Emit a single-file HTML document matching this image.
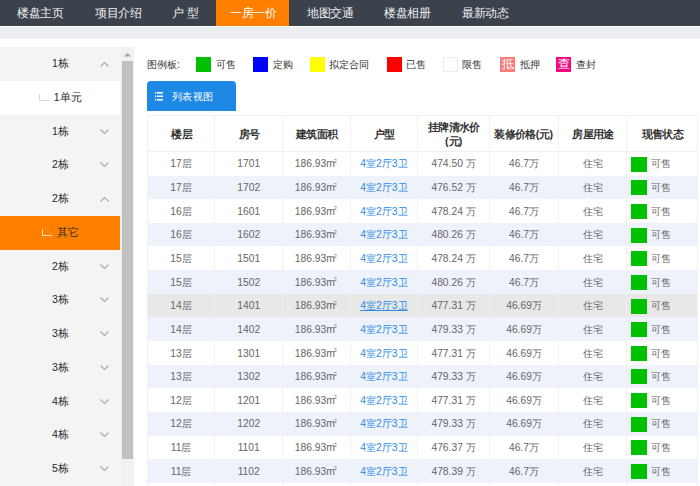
<!DOCTYPE html><html><head><meta charset="utf-8"><style>
*{margin:0;padding:0;box-sizing:border-box}
html,body{width:700px;height:486px;overflow:hidden;background:#fff}
body{position:relative;font-family:"Liberation Sans",sans-serif;}
.a{position:absolute;white-space:nowrap}
#nav{left:0;top:0;width:700px;height:26.4px;background:#3c424c}
.nt{position:absolute;top:0;height:26px;line-height:26px;font-size:12px;color:#eceef0;transform:scale(0.97);transform-origin:0 50%}
#tab{left:216.4px;top:0;width:72.7px;height:26.4px;background:#ff8000}
#band{left:0;top:27.4px;width:700px;height:11.2px;background:#eceef2}
#side{left:0;top:47.1px;width:121px;height:440px;background:#f4f4f4}
.si{position:absolute;left:0;width:120.4px;height:33.75px;line-height:33.75px;font-size:10.5px;color:#2a2a2a}
.si .t{position:absolute;left:0;width:121px;text-align:center}
.chev{position:absolute;left:100.3px;width:9px;height:6px}
#track{left:120.5px;top:47px;width:13.8px;height:439px;background:#f1f1f1}
#thumb{left:121.8px;top:61.3px;width:11.4px;height:397.7px;background:#c1c1c1}
.lg{position:absolute;top:57px;width:15px;height:14.6px}
.lt{position:absolute;top:56.5px;height:16px;line-height:16px;font-size:10.4px;color:#333}
#btab{left:147px;top:81px;width:88.5px;height:30.2px;background:#1e88e5;border-radius:4px 4px 0 0}
.cell{position:absolute;text-align:center;font-size:10.3px;color:#666}
.hd{font-weight:bold;color:#333;transform:scale(1.03)}
.row{position:absolute;left:147.5px;width:550px}
.vl{position:absolute;width:1px;background:#f0f1f4}
.hl{position:absolute;height:1px;background:#f0f1f4}
.lk{color:#2b8ce6}
.m2{font-size:10.4px;letter-spacing:0}.m2 i{font-style:normal;font-size:5.5px;position:relative;top:-4.4px;left:-1.2px}
.gb{position:absolute;width:15.6px;height:15px;background:#00c000}
</style></head><body><div id="nav" class="a">
<div class="nt" style="left:16.8px">楼盘主页</div>
<div class="nt" style="left:94.5px">项目介绍</div>
<div class="nt" style="left:172.10000000000002px">户 型</div>
<div class="nt" style="left:306.8px">地图交通</div>
<div class="nt" style="left:384.1px">楼盘相册</div>
<div class="nt" style="left:461.7px">最新动态</div>
</div>
<div id="tab" class="a"><div class="nt" style="left:0.7px;width:72.5px;text-align:center;color:#fff;transform-origin:50% 50%">一房一价</div></div>
<div id="band" class="a"></div>
<div id="side" class="a">
<div class="si" style="top:0.0px"><div class="t">1栋</div><svg class="chev" style="top:14px" viewBox="0 0 9 6"><path d="M0.5 5.5 L4.5 1.5 L8.5 5.5" fill="none" stroke="#ababab" stroke-width="1.1"/></svg></div>
<div class="si" style="top:33.75px;background:#fff"><div class="t"><span style="display:inline-block;width:10px;height:7px;border-left:1px solid #d9d9d9;border-bottom:1px solid #d9d9d9;margin-right:4.5px;vertical-align:0px"></span>1单元</div></div>
<div class="si" style="top:67.5px"><div class="t">1栋</div><svg class="chev" style="top:14px" viewBox="0 0 9 6"><path d="M0.5 0.5 L4.5 4.5 L8.5 0.5" fill="none" stroke="#ababab" stroke-width="1.1"/></svg></div>
<div class="si" style="top:101.25px"><div class="t">2栋</div><svg class="chev" style="top:14px" viewBox="0 0 9 6"><path d="M0.5 0.5 L4.5 4.5 L8.5 0.5" fill="none" stroke="#ababab" stroke-width="1.1"/></svg></div>
<div class="si" style="top:135.0px"><div class="t">2栋</div><svg class="chev" style="top:14px" viewBox="0 0 9 6"><path d="M0.5 5.5 L4.5 1.5 L8.5 5.5" fill="none" stroke="#ababab" stroke-width="1.1"/></svg></div>
<div class="si" style="top:168.75px;background:#ff8000"><div class="t"><span style="display:inline-block;width:10px;height:7px;border-left:1px solid #ffdcb5;border-bottom:1px solid #ffdcb5;margin-right:4.5px;vertical-align:0px"></span>其它</div></div>
<div class="si" style="top:202.5px"><div class="t">2栋</div><svg class="chev" style="top:14px" viewBox="0 0 9 6"><path d="M0.5 0.5 L4.5 4.5 L8.5 0.5" fill="none" stroke="#ababab" stroke-width="1.1"/></svg></div>
<div class="si" style="top:236.25px"><div class="t">3栋</div><svg class="chev" style="top:14px" viewBox="0 0 9 6"><path d="M0.5 0.5 L4.5 4.5 L8.5 0.5" fill="none" stroke="#ababab" stroke-width="1.1"/></svg></div>
<div class="si" style="top:270.0px"><div class="t">3栋</div><svg class="chev" style="top:14px" viewBox="0 0 9 6"><path d="M0.5 0.5 L4.5 4.5 L8.5 0.5" fill="none" stroke="#ababab" stroke-width="1.1"/></svg></div>
<div class="si" style="top:303.75px"><div class="t">3栋</div><svg class="chev" style="top:14px" viewBox="0 0 9 6"><path d="M0.5 0.5 L4.5 4.5 L8.5 0.5" fill="none" stroke="#ababab" stroke-width="1.1"/></svg></div>
<div class="si" style="top:337.5px"><div class="t">4栋</div><svg class="chev" style="top:14px" viewBox="0 0 9 6"><path d="M0.5 0.5 L4.5 4.5 L8.5 0.5" fill="none" stroke="#ababab" stroke-width="1.1"/></svg></div>
<div class="si" style="top:371.25px"><div class="t">4栋</div><svg class="chev" style="top:14px" viewBox="0 0 9 6"><path d="M0.5 0.5 L4.5 4.5 L8.5 0.5" fill="none" stroke="#ababab" stroke-width="1.1"/></svg></div>
<div class="si" style="top:405.0px"><div class="t">5栋</div><svg class="chev" style="top:14px" viewBox="0 0 9 6"><path d="M0.5 0.5 L4.5 4.5 L8.5 0.5" fill="none" stroke="#ababab" stroke-width="1.1"/></svg></div>
</div>
<div id="track" class="a"></div>
<svg class="a" style="left:123px;top:52px" width="9" height="5" viewBox="0 0 9 5"><path d="M1 4.5 L4.5 1 L8 4.5Z" fill="#a3a3a3"/></svg>
<div id="thumb" class="a"></div>
<div class="lt" style="left:147px">图例板:</div>
<div class="lg" style="left:196.4px;background:#00c000;"></div>
<div class="lt" style="left:215.9px">可售</div>
<div class="lg" style="left:253px;background:#0000ff;"></div>
<div class="lt" style="left:272.5px">定购</div>
<div class="lg" style="left:309.6px;background:#ffff00;"></div>
<div class="lt" style="left:329.1px">拟定合同</div>
<div class="lg" style="left:386.8px;background:#ff0000;"></div>
<div class="lt" style="left:406.3px">已售</div>
<div class="lg" style="left:442.6px;background:#fff;border:1px solid #ebebeb"></div>
<div class="lt" style="left:462.1px">限售</div>
<div class="lg" style="left:500px;background:#f87a7a;color:#fff;font-size:11.6px;line-height:14.6px;text-align:center">抵</div>
<div class="lt" style="left:519.5px">抵押</div>
<div class="lg" style="left:556px;background:#f5087f;color:#fff;font-size:11.6px;line-height:14.6px;text-align:center">查</div>
<div class="lt" style="left:575.5px">查封</div>
<div id="btab" class="a"><svg style="position:absolute;left:8px;top:11.3px" width="8.2" height="9" viewBox="0 0 8.2 9"><g fill="#fff"><rect x="0" y="0" width="1.2" height="1.6"/><rect x="1.9" y="0" width="6.2" height="1.6"/><rect x="0" y="3.5" width="1.2" height="1.6"/><rect x="1.9" y="3.5" width="6.2" height="1.6"/><rect x="0" y="7" width="1.2" height="1.6"/><rect x="1.9" y="7" width="6.2" height="1.6"/></g></svg><span style="position:absolute;left:25px;top:0.5px;line-height:30px;font-size:10px;color:#fff;transform:scale(1.03);transform-origin:0 50%">列表视图</span></div>
<div class="cell hd a" style="left:147.5px;width:67.1px;top:115.4px;height:36.5px;line-height:39.5px">楼层</div>
<div class="cell hd a" style="left:214.6px;width:68.29999999999998px;top:115.4px;height:36.5px;line-height:39.5px">房号</div>
<div class="cell hd a" style="left:282.9px;width:67.10000000000002px;top:115.4px;height:36.5px;line-height:39.5px">建筑面积</div>
<div class="cell hd a" style="left:350.0px;width:67.89999999999998px;top:115.4px;height:36.5px;line-height:39.5px">户型</div>
<div class="cell hd a" style="left:417.9px;width:71.40000000000003px;top:115.4px;height:36.5px;line-height:13.5px;padding-top:6px">挂牌清水价<br>(元)</div>
<div class="cell hd a" style="left:489.3px;width:69.49999999999994px;top:115.4px;height:36.5px;line-height:39.5px">装修价格(元)</div>
<div class="cell hd a" style="left:558.8px;width:67.80000000000007px;top:115.4px;height:36.5px;line-height:39.5px">房屋用途</div>
<div class="cell hd a" style="left:626.6px;width:70.79999999999995px;top:115.4px;height:36.5px;line-height:39.5px">现售状态</div>
<div class="row" style="top:151.9px;height:23.64px;background:#fff"></div>
<div class="cell a" style="left:147.5px;width:67.1px;top:152.4px;height:23.64px;line-height:23.64px;">17层</div>
<div class="cell a" style="left:214.6px;width:68.29999999999998px;top:152.4px;height:23.64px;line-height:23.64px;">1701</div>
<div class="cell a" style="left:282.9px;width:67.10000000000002px;top:152.4px;height:23.64px;line-height:23.64px;">186.93<span class=m2>m<i>2</i></span></div>
<div class="cell a lk" style="left:350.0px;width:67.89999999999998px;top:152.4px;height:23.64px;line-height:23.64px;">4室2厅3卫</div>
<div class="cell a" style="left:417.9px;width:71.40000000000003px;top:152.4px;height:23.64px;line-height:23.64px;">474.50 万</div>
<div class="cell a" style="left:489.3px;width:69.49999999999994px;top:152.4px;height:23.64px;line-height:23.64px;">46.7万</div>
<div class="cell a" style="left:558.8px;width:67.80000000000007px;top:152.4px;height:23.64px;line-height:23.64px;">住宅</div>
<div class="gb" style="left:631px;top:156.70000000000002px"></div><div class="cell a" style="left:650.7px;top:152.4px;line-height:23.64px;text-align:left">可售</div>
<div class="row" style="top:175.54000000000002px;height:23.64px;background:#eef2fb"></div>
<div class="cell a" style="left:147.5px;width:67.1px;top:176.04000000000002px;height:23.64px;line-height:23.64px;">17层</div>
<div class="cell a" style="left:214.6px;width:68.29999999999998px;top:176.04000000000002px;height:23.64px;line-height:23.64px;">1702</div>
<div class="cell a" style="left:282.9px;width:67.10000000000002px;top:176.04000000000002px;height:23.64px;line-height:23.64px;">186.93<span class=m2>m<i>2</i></span></div>
<div class="cell a lk" style="left:350.0px;width:67.89999999999998px;top:176.04000000000002px;height:23.64px;line-height:23.64px;">4室2厅3卫</div>
<div class="cell a" style="left:417.9px;width:71.40000000000003px;top:176.04000000000002px;height:23.64px;line-height:23.64px;">476.52 万</div>
<div class="cell a" style="left:489.3px;width:69.49999999999994px;top:176.04000000000002px;height:23.64px;line-height:23.64px;">46.7万</div>
<div class="cell a" style="left:558.8px;width:67.80000000000007px;top:176.04000000000002px;height:23.64px;line-height:23.64px;">住宅</div>
<div class="gb" style="left:631px;top:180.34000000000003px"></div><div class="cell a" style="left:650.7px;top:176.04000000000002px;line-height:23.64px;text-align:left">可售</div>
<div class="row" style="top:199.18px;height:23.64px;background:#fff"></div>
<div class="cell a" style="left:147.5px;width:67.1px;top:199.68px;height:23.64px;line-height:23.64px;">16层</div>
<div class="cell a" style="left:214.6px;width:68.29999999999998px;top:199.68px;height:23.64px;line-height:23.64px;">1601</div>
<div class="cell a" style="left:282.9px;width:67.10000000000002px;top:199.68px;height:23.64px;line-height:23.64px;">186.93<span class=m2>m<i>2</i></span></div>
<div class="cell a lk" style="left:350.0px;width:67.89999999999998px;top:199.68px;height:23.64px;line-height:23.64px;">4室2厅3卫</div>
<div class="cell a" style="left:417.9px;width:71.40000000000003px;top:199.68px;height:23.64px;line-height:23.64px;">478.24 万</div>
<div class="cell a" style="left:489.3px;width:69.49999999999994px;top:199.68px;height:23.64px;line-height:23.64px;">46.7万</div>
<div class="cell a" style="left:558.8px;width:67.80000000000007px;top:199.68px;height:23.64px;line-height:23.64px;">住宅</div>
<div class="gb" style="left:631px;top:203.98000000000002px"></div><div class="cell a" style="left:650.7px;top:199.68px;line-height:23.64px;text-align:left">可售</div>
<div class="row" style="top:222.82px;height:23.64px;background:#eef2fb"></div>
<div class="cell a" style="left:147.5px;width:67.1px;top:223.32px;height:23.64px;line-height:23.64px;">16层</div>
<div class="cell a" style="left:214.6px;width:68.29999999999998px;top:223.32px;height:23.64px;line-height:23.64px;">1602</div>
<div class="cell a" style="left:282.9px;width:67.10000000000002px;top:223.32px;height:23.64px;line-height:23.64px;">186.93<span class=m2>m<i>2</i></span></div>
<div class="cell a lk" style="left:350.0px;width:67.89999999999998px;top:223.32px;height:23.64px;line-height:23.64px;">4室2厅3卫</div>
<div class="cell a" style="left:417.9px;width:71.40000000000003px;top:223.32px;height:23.64px;line-height:23.64px;">480.26 万</div>
<div class="cell a" style="left:489.3px;width:69.49999999999994px;top:223.32px;height:23.64px;line-height:23.64px;">46.7万</div>
<div class="cell a" style="left:558.8px;width:67.80000000000007px;top:223.32px;height:23.64px;line-height:23.64px;">住宅</div>
<div class="gb" style="left:631px;top:227.62px"></div><div class="cell a" style="left:650.7px;top:223.32px;line-height:23.64px;text-align:left">可售</div>
<div class="row" style="top:246.46px;height:23.64px;background:#fff"></div>
<div class="cell a" style="left:147.5px;width:67.1px;top:246.96px;height:23.64px;line-height:23.64px;">15层</div>
<div class="cell a" style="left:214.6px;width:68.29999999999998px;top:246.96px;height:23.64px;line-height:23.64px;">1501</div>
<div class="cell a" style="left:282.9px;width:67.10000000000002px;top:246.96px;height:23.64px;line-height:23.64px;">186.93<span class=m2>m<i>2</i></span></div>
<div class="cell a lk" style="left:350.0px;width:67.89999999999998px;top:246.96px;height:23.64px;line-height:23.64px;">4室2厅3卫</div>
<div class="cell a" style="left:417.9px;width:71.40000000000003px;top:246.96px;height:23.64px;line-height:23.64px;">478.24 万</div>
<div class="cell a" style="left:489.3px;width:69.49999999999994px;top:246.96px;height:23.64px;line-height:23.64px;">46.7万</div>
<div class="cell a" style="left:558.8px;width:67.80000000000007px;top:246.96px;height:23.64px;line-height:23.64px;">住宅</div>
<div class="gb" style="left:631px;top:251.26000000000002px"></div><div class="cell a" style="left:650.7px;top:246.96px;line-height:23.64px;text-align:left">可售</div>
<div class="row" style="top:270.1px;height:23.64px;background:#eef2fb"></div>
<div class="cell a" style="left:147.5px;width:67.1px;top:270.6px;height:23.64px;line-height:23.64px;">15层</div>
<div class="cell a" style="left:214.6px;width:68.29999999999998px;top:270.6px;height:23.64px;line-height:23.64px;">1502</div>
<div class="cell a" style="left:282.9px;width:67.10000000000002px;top:270.6px;height:23.64px;line-height:23.64px;">186.93<span class=m2>m<i>2</i></span></div>
<div class="cell a lk" style="left:350.0px;width:67.89999999999998px;top:270.6px;height:23.64px;line-height:23.64px;">4室2厅3卫</div>
<div class="cell a" style="left:417.9px;width:71.40000000000003px;top:270.6px;height:23.64px;line-height:23.64px;">480.26 万</div>
<div class="cell a" style="left:489.3px;width:69.49999999999994px;top:270.6px;height:23.64px;line-height:23.64px;">46.7万</div>
<div class="cell a" style="left:558.8px;width:67.80000000000007px;top:270.6px;height:23.64px;line-height:23.64px;">住宅</div>
<div class="gb" style="left:631px;top:274.90000000000003px"></div><div class="cell a" style="left:650.7px;top:270.6px;line-height:23.64px;text-align:left">可售</div>
<div class="row" style="top:293.74px;height:23.64px;background:#e8e8e8"></div>
<div class="cell a" style="left:147.5px;width:67.1px;top:294.24px;height:23.64px;line-height:23.64px;">14层</div>
<div class="cell a" style="left:214.6px;width:68.29999999999998px;top:294.24px;height:23.64px;line-height:23.64px;">1401</div>
<div class="cell a" style="left:282.9px;width:67.10000000000002px;top:294.24px;height:23.64px;line-height:23.64px;">186.93<span class=m2>m<i>2</i></span></div>
<div class="cell a lk" style="left:350.0px;width:67.89999999999998px;top:294.24px;height:23.64px;line-height:23.64px;text-decoration:underline;">4室2厅3卫</div>
<div class="cell a" style="left:417.9px;width:71.40000000000003px;top:294.24px;height:23.64px;line-height:23.64px;">477.31 万</div>
<div class="cell a" style="left:489.3px;width:69.49999999999994px;top:294.24px;height:23.64px;line-height:23.64px;">46.69万</div>
<div class="cell a" style="left:558.8px;width:67.80000000000007px;top:294.24px;height:23.64px;line-height:23.64px;">住宅</div>
<div class="gb" style="left:631px;top:298.54px"></div><div class="cell a" style="left:650.7px;top:294.24px;line-height:23.64px;text-align:left">可售</div>
<div class="row" style="top:317.38px;height:23.64px;background:#eef2fb"></div>
<div class="cell a" style="left:147.5px;width:67.1px;top:317.88px;height:23.64px;line-height:23.64px;">14层</div>
<div class="cell a" style="left:214.6px;width:68.29999999999998px;top:317.88px;height:23.64px;line-height:23.64px;">1402</div>
<div class="cell a" style="left:282.9px;width:67.10000000000002px;top:317.88px;height:23.64px;line-height:23.64px;">186.93<span class=m2>m<i>2</i></span></div>
<div class="cell a lk" style="left:350.0px;width:67.89999999999998px;top:317.88px;height:23.64px;line-height:23.64px;">4室2厅3卫</div>
<div class="cell a" style="left:417.9px;width:71.40000000000003px;top:317.88px;height:23.64px;line-height:23.64px;">479.33 万</div>
<div class="cell a" style="left:489.3px;width:69.49999999999994px;top:317.88px;height:23.64px;line-height:23.64px;">46.69万</div>
<div class="cell a" style="left:558.8px;width:67.80000000000007px;top:317.88px;height:23.64px;line-height:23.64px;">住宅</div>
<div class="gb" style="left:631px;top:322.18px"></div><div class="cell a" style="left:650.7px;top:317.88px;line-height:23.64px;text-align:left">可售</div>
<div class="row" style="top:341.02px;height:23.64px;background:#fff"></div>
<div class="cell a" style="left:147.5px;width:67.1px;top:341.52px;height:23.64px;line-height:23.64px;">13层</div>
<div class="cell a" style="left:214.6px;width:68.29999999999998px;top:341.52px;height:23.64px;line-height:23.64px;">1301</div>
<div class="cell a" style="left:282.9px;width:67.10000000000002px;top:341.52px;height:23.64px;line-height:23.64px;">186.93<span class=m2>m<i>2</i></span></div>
<div class="cell a lk" style="left:350.0px;width:67.89999999999998px;top:341.52px;height:23.64px;line-height:23.64px;">4室2厅3卫</div>
<div class="cell a" style="left:417.9px;width:71.40000000000003px;top:341.52px;height:23.64px;line-height:23.64px;">477.31 万</div>
<div class="cell a" style="left:489.3px;width:69.49999999999994px;top:341.52px;height:23.64px;line-height:23.64px;">46.69万</div>
<div class="cell a" style="left:558.8px;width:67.80000000000007px;top:341.52px;height:23.64px;line-height:23.64px;">住宅</div>
<div class="gb" style="left:631px;top:345.82px"></div><div class="cell a" style="left:650.7px;top:341.52px;line-height:23.64px;text-align:left">可售</div>
<div class="row" style="top:364.65999999999997px;height:23.64px;background:#eef2fb"></div>
<div class="cell a" style="left:147.5px;width:67.1px;top:365.15999999999997px;height:23.64px;line-height:23.64px;">13层</div>
<div class="cell a" style="left:214.6px;width:68.29999999999998px;top:365.15999999999997px;height:23.64px;line-height:23.64px;">1302</div>
<div class="cell a" style="left:282.9px;width:67.10000000000002px;top:365.15999999999997px;height:23.64px;line-height:23.64px;">186.93<span class=m2>m<i>2</i></span></div>
<div class="cell a lk" style="left:350.0px;width:67.89999999999998px;top:365.15999999999997px;height:23.64px;line-height:23.64px;">4室2厅3卫</div>
<div class="cell a" style="left:417.9px;width:71.40000000000003px;top:365.15999999999997px;height:23.64px;line-height:23.64px;">479.33 万</div>
<div class="cell a" style="left:489.3px;width:69.49999999999994px;top:365.15999999999997px;height:23.64px;line-height:23.64px;">46.69万</div>
<div class="cell a" style="left:558.8px;width:67.80000000000007px;top:365.15999999999997px;height:23.64px;line-height:23.64px;">住宅</div>
<div class="gb" style="left:631px;top:369.46px"></div><div class="cell a" style="left:650.7px;top:365.15999999999997px;line-height:23.64px;text-align:left">可售</div>
<div class="row" style="top:388.3px;height:23.64px;background:#fff"></div>
<div class="cell a" style="left:147.5px;width:67.1px;top:388.8px;height:23.64px;line-height:23.64px;">12层</div>
<div class="cell a" style="left:214.6px;width:68.29999999999998px;top:388.8px;height:23.64px;line-height:23.64px;">1201</div>
<div class="cell a" style="left:282.9px;width:67.10000000000002px;top:388.8px;height:23.64px;line-height:23.64px;">186.93<span class=m2>m<i>2</i></span></div>
<div class="cell a lk" style="left:350.0px;width:67.89999999999998px;top:388.8px;height:23.64px;line-height:23.64px;">4室2厅3卫</div>
<div class="cell a" style="left:417.9px;width:71.40000000000003px;top:388.8px;height:23.64px;line-height:23.64px;">477.31 万</div>
<div class="cell a" style="left:489.3px;width:69.49999999999994px;top:388.8px;height:23.64px;line-height:23.64px;">46.69万</div>
<div class="cell a" style="left:558.8px;width:67.80000000000007px;top:388.8px;height:23.64px;line-height:23.64px;">住宅</div>
<div class="gb" style="left:631px;top:393.1px"></div><div class="cell a" style="left:650.7px;top:388.8px;line-height:23.64px;text-align:left">可售</div>
<div class="row" style="top:411.94000000000005px;height:23.64px;background:#eef2fb"></div>
<div class="cell a" style="left:147.5px;width:67.1px;top:412.44000000000005px;height:23.64px;line-height:23.64px;">12层</div>
<div class="cell a" style="left:214.6px;width:68.29999999999998px;top:412.44000000000005px;height:23.64px;line-height:23.64px;">1202</div>
<div class="cell a" style="left:282.9px;width:67.10000000000002px;top:412.44000000000005px;height:23.64px;line-height:23.64px;">186.93<span class=m2>m<i>2</i></span></div>
<div class="cell a lk" style="left:350.0px;width:67.89999999999998px;top:412.44000000000005px;height:23.64px;line-height:23.64px;">4室2厅3卫</div>
<div class="cell a" style="left:417.9px;width:71.40000000000003px;top:412.44000000000005px;height:23.64px;line-height:23.64px;">479.33 万</div>
<div class="cell a" style="left:489.3px;width:69.49999999999994px;top:412.44000000000005px;height:23.64px;line-height:23.64px;">46.69万</div>
<div class="cell a" style="left:558.8px;width:67.80000000000007px;top:412.44000000000005px;height:23.64px;line-height:23.64px;">住宅</div>
<div class="gb" style="left:631px;top:416.74000000000007px"></div><div class="cell a" style="left:650.7px;top:412.44000000000005px;line-height:23.64px;text-align:left">可售</div>
<div class="row" style="top:435.58000000000004px;height:23.64px;background:#fff"></div>
<div class="cell a" style="left:147.5px;width:67.1px;top:436.08000000000004px;height:23.64px;line-height:23.64px;">11层</div>
<div class="cell a" style="left:214.6px;width:68.29999999999998px;top:436.08000000000004px;height:23.64px;line-height:23.64px;">1101</div>
<div class="cell a" style="left:282.9px;width:67.10000000000002px;top:436.08000000000004px;height:23.64px;line-height:23.64px;">186.93<span class=m2>m<i>2</i></span></div>
<div class="cell a lk" style="left:350.0px;width:67.89999999999998px;top:436.08000000000004px;height:23.64px;line-height:23.64px;">4室2厅3卫</div>
<div class="cell a" style="left:417.9px;width:71.40000000000003px;top:436.08000000000004px;height:23.64px;line-height:23.64px;">476.37 万</div>
<div class="cell a" style="left:489.3px;width:69.49999999999994px;top:436.08000000000004px;height:23.64px;line-height:23.64px;">46.7万</div>
<div class="cell a" style="left:558.8px;width:67.80000000000007px;top:436.08000000000004px;height:23.64px;line-height:23.64px;">住宅</div>
<div class="gb" style="left:631px;top:440.38000000000005px"></div><div class="cell a" style="left:650.7px;top:436.08000000000004px;line-height:23.64px;text-align:left">可售</div>
<div class="row" style="top:459.22px;height:23.64px;background:#eef2fb"></div>
<div class="cell a" style="left:147.5px;width:67.1px;top:459.72px;height:23.64px;line-height:23.64px;">11层</div>
<div class="cell a" style="left:214.6px;width:68.29999999999998px;top:459.72px;height:23.64px;line-height:23.64px;">1102</div>
<div class="cell a" style="left:282.9px;width:67.10000000000002px;top:459.72px;height:23.64px;line-height:23.64px;">186.93<span class=m2>m<i>2</i></span></div>
<div class="cell a lk" style="left:350.0px;width:67.89999999999998px;top:459.72px;height:23.64px;line-height:23.64px;">4室2厅3卫</div>
<div class="cell a" style="left:417.9px;width:71.40000000000003px;top:459.72px;height:23.64px;line-height:23.64px;">478.39 万</div>
<div class="cell a" style="left:489.3px;width:69.49999999999994px;top:459.72px;height:23.64px;line-height:23.64px;">46.7万</div>
<div class="cell a" style="left:558.8px;width:67.80000000000007px;top:459.72px;height:23.64px;line-height:23.64px;">住宅</div>
<div class="gb" style="left:631px;top:464.02000000000004px"></div><div class="cell a" style="left:650.7px;top:459.72px;line-height:23.64px;text-align:left">可售</div>
<div class="vl" style="left:147.0px;top:115.4px;height:370.6px"></div>
<div class="vl" style="left:214.1px;top:115.4px;height:370.6px"></div>
<div class="vl" style="left:282.4px;top:115.4px;height:370.6px"></div>
<div class="vl" style="left:349.5px;top:115.4px;height:370.6px"></div>
<div class="vl" style="left:417.4px;top:115.4px;height:370.6px"></div>
<div class="vl" style="left:488.8px;top:115.4px;height:370.6px"></div>
<div class="vl" style="left:558.3px;top:115.4px;height:370.6px"></div>
<div class="vl" style="left:626.1px;top:115.4px;height:370.6px"></div>
<div class="vl" style="left:696.9px;top:115.4px;height:370.6px"></div>
<div class="hl" style="left:147.5px;width:549.9px;top:114.9px"></div>
<div class="hl" style="left:147.5px;width:549.9px;top:151.4px"></div></body></html>
